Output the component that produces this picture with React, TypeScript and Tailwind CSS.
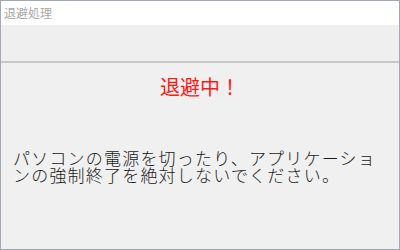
export default function App() {
  return (
    <div
      className="flex h-[250px] w-[400px] flex-col border border-[#a2a8b6] bg-[#f0f0f0]"
      style={{ fontFamily: '"Noto Sans CJK JP", "Noto Sans", sans-serif' }}
    >
      <div className="flex h-[24px] items-center bg-white px-[3px] text-[12px] text-[#a8a8a8]">
        退避処理
      </div>
      <div className="h-[36px] bg-[#efefef]" />
      <div className="h-[2px] bg-[#c8c8c8]" />
      <div className="flex flex-1 flex-col px-[12px] pt-[14px]">
        <div className="text-center text-[20px] leading-[20px] text-[#ff1a1a]">退避中！</div>
        <p className="mt-[52px] w-[372px] text-[17px] font-light leading-[17px] tracking-[1.2px] text-[#1a1a1a]">
          パソコンの電源を切ったり、アプリケーションの強制終了を絶対しないでください。
        </p>
      </div>
    </div>
  );
}
